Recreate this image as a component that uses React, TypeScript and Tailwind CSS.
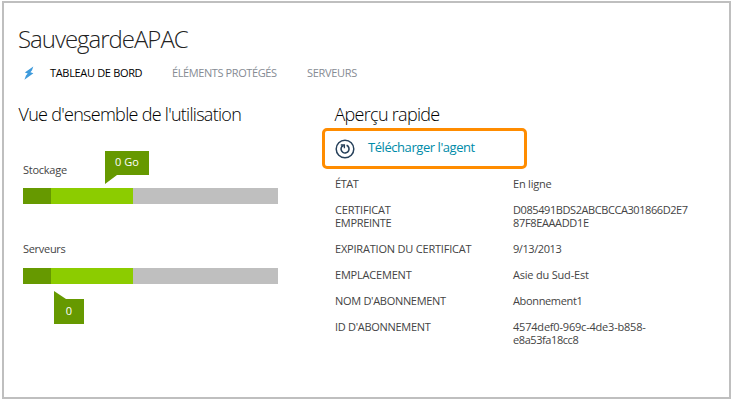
type Line = { text: string; tracking: string };
type Detail = { label: Line[]; value: Line[] };

const NORMAL = "tracking-[-0.2px]";
const TIGHT = "tracking-[-0.42px]";

const details: Detail[] = [
  { label: [{ text: "ÉTAT", tracking: TIGHT }], value: [{ text: "En ligne", tracking: NORMAL }] },
  {
    label: [
      { text: "CERTIFICAT", tracking: NORMAL },
      { text: "EMPREINTE", tracking: "tracking-[-0.3px]" },
    ],
    value: [
      { text: "D085491BDS2ABCBCCA301866D2E7", tracking: TIGHT },
      { text: "87F8EAAADD1E", tracking: "tracking-[-0.35px]" },
    ],
  },
  {
    label: [{ text: "EXPIRATION DU CERTIFICAT", tracking: NORMAL }],
    value: [{ text: "9/13/2013", tracking: TIGHT }],
  },
  { label: [{ text: "EMPLACEMENT", tracking: NORMAL }], value: [{ text: "Asie du Sud-Est", tracking: NORMAL }] },
  {
    label: [{ text: "NOM D'ABONNEMENT", tracking: "tracking-[-0.3px]" }],
    value: [{ text: "Abonnement1", tracking: "tracking-[-0.35px]" }],
  },
  {
    label: [{ text: "ID D'ABONNEMENT", tracking: "tracking-[-0.3px]" }],
    value: [
      { text: "4574def0-969c-4de3-b858-", tracking: NORMAL },
      { text: "e8a53fa18cc8", tracking: TIGHT },
    ],
  },
];

function Lines({ lines, className = "" }: { lines: Line[]; className?: string }) {
  return (
    <div className={className}>
      {lines.map((line) => (
        <div key={line.text} className={line.tracking}>
          {line.text}
        </div>
      ))}
    </div>
  );
}

function UsageBar() {
  return (
    <div className="flex h-4 w-[255px] bg-[#bfbfbf]">
      <div className="w-[28px] bg-[#669900]" />
      <div className="w-[82px] bg-[#8ccc00]" />
    </div>
  );
}

function Heading({ children }: { children: string }) {
  return (
    <h2 className="-ml-px h-6 pl-[0.5px] text-[18px] leading-6 font-light tracking-[-0.71px] whitespace-nowrap text-black">
      {children}
    </h2>
  );
}

function BoltIcon() {
  return (
    <svg className="h-3.5 w-3" viewBox="0 0 12 14">
      <path d="M10.3 0.5 1.8 6.6 4.7 7.6 3 9.6 1.4 13.8 10.4 7.3 7.4 6.2 9 4.2Z" fill="#3f9bdc" />
    </svg>
  );
}

function AgentIcon() {
  return (
    <svg className="size-5" viewBox="0 0 20 20" fill="none" stroke="#26405a">
      <circle cx="10" cy="10" r="8.8" strokeWidth="1.5" />
      <path d="M11.6 6.3A4 4 0 1 1 6.8 7.6L8.6 6.6" strokeWidth="1.6" />
      <path d="M5.8 6H9.4V9.2" strokeWidth="1.3" />
    </svg>
  );
}

export default function App() {
  return (
    <div className="h-[401px] w-[733px] bg-white pt-px pl-[2px] font-['Open_Sans',sans-serif]">
      <main className="h-[398px] w-[729px] border-2 border-[#bfbfbf] pt-5 pl-[15px]">
        <h1 className="-ml-px h-8 text-2xl leading-8 font-light tracking-[-1.02px] whitespace-nowrap text-[#222]">
          SauvegardeAPAC
        </h1>
        <nav className="mt-2.5 flex h-4 items-center pl-1 text-[11px] leading-4 whitespace-nowrap text-[#868b93]">
          <BoltIcon />
          <span className="ml-[15px] w-[122px] tracking-[-0.33px] text-black">TABLEAU DE BORD</span>
          <span className="w-[135px] tracking-[-0.4px]">ÉLÉMENTS PROTÉGÉS</span>
          <span className="tracking-[-0.3px]">SERVEURS</span>
        </nav>
        <div className="mt-[21px] flex">
          <section className="w-[316px] shrink-0">
            <Heading>Vue d'ensemble de l'utilisation</Heading>
            <div className="mt-[25px] ml-1 flex h-[37px] text-[11px] text-[#444]">
              <span className="mt-[11px] w-[82px] leading-4 tracking-[-0.25px]">Stockage</span>
              <div className="h-[33px] w-[44px] bg-[#669900] text-center leading-[22px] text-white [clip-path:polygon(0_0,100%_0,100%_24px,12px_24px,0_100%)]">
                0 Go
              </div>
            </div>
            <div className="ml-1">
              <UsageBar />
              <div className="mt-[37px] mb-[11px] h-4 text-[11px] leading-4 tracking-[-0.3px] text-[#444]">Serveurs</div>
              <UsageBar />
              <div className="mt-[7px] ml-[31px] h-[33px] w-[30px] bg-[#669900] pt-2 text-center text-[11px] leading-6 text-white [clip-path:polygon(0_0,12px_8px,100%_8px,100%_100%,0_100%)]">
                0
              </div>
            </div>
          </section>
          <section>
            <Heading>Aperçu rapide</Heading>
            <div className="mt-0.5 -ml-[13px] flex h-[41px] w-[205px] items-center rounded-[5px] border-3 border-[#ff8c00] pl-[10px] text-[13px] text-[#008ba8]">
              <AgentIcon />
              <span className="-mt-px ml-[13px] tracking-[-0.44px]">Télécharger l'agent</span>
            </div>
            <div className="mt-2 flex flex-col gap-[13px] text-[11px] leading-[13px] whitespace-nowrap text-[#444]">
              {details.map((d) => (
                <div key={d.label[0].text} className="flex">
                  <Lines lines={d.label} className="w-[178px]" />
                  <Lines lines={d.value} />
                </div>
              ))}
            </div>
          </section>
        </div>
      </main>
    </div>
  );
}
